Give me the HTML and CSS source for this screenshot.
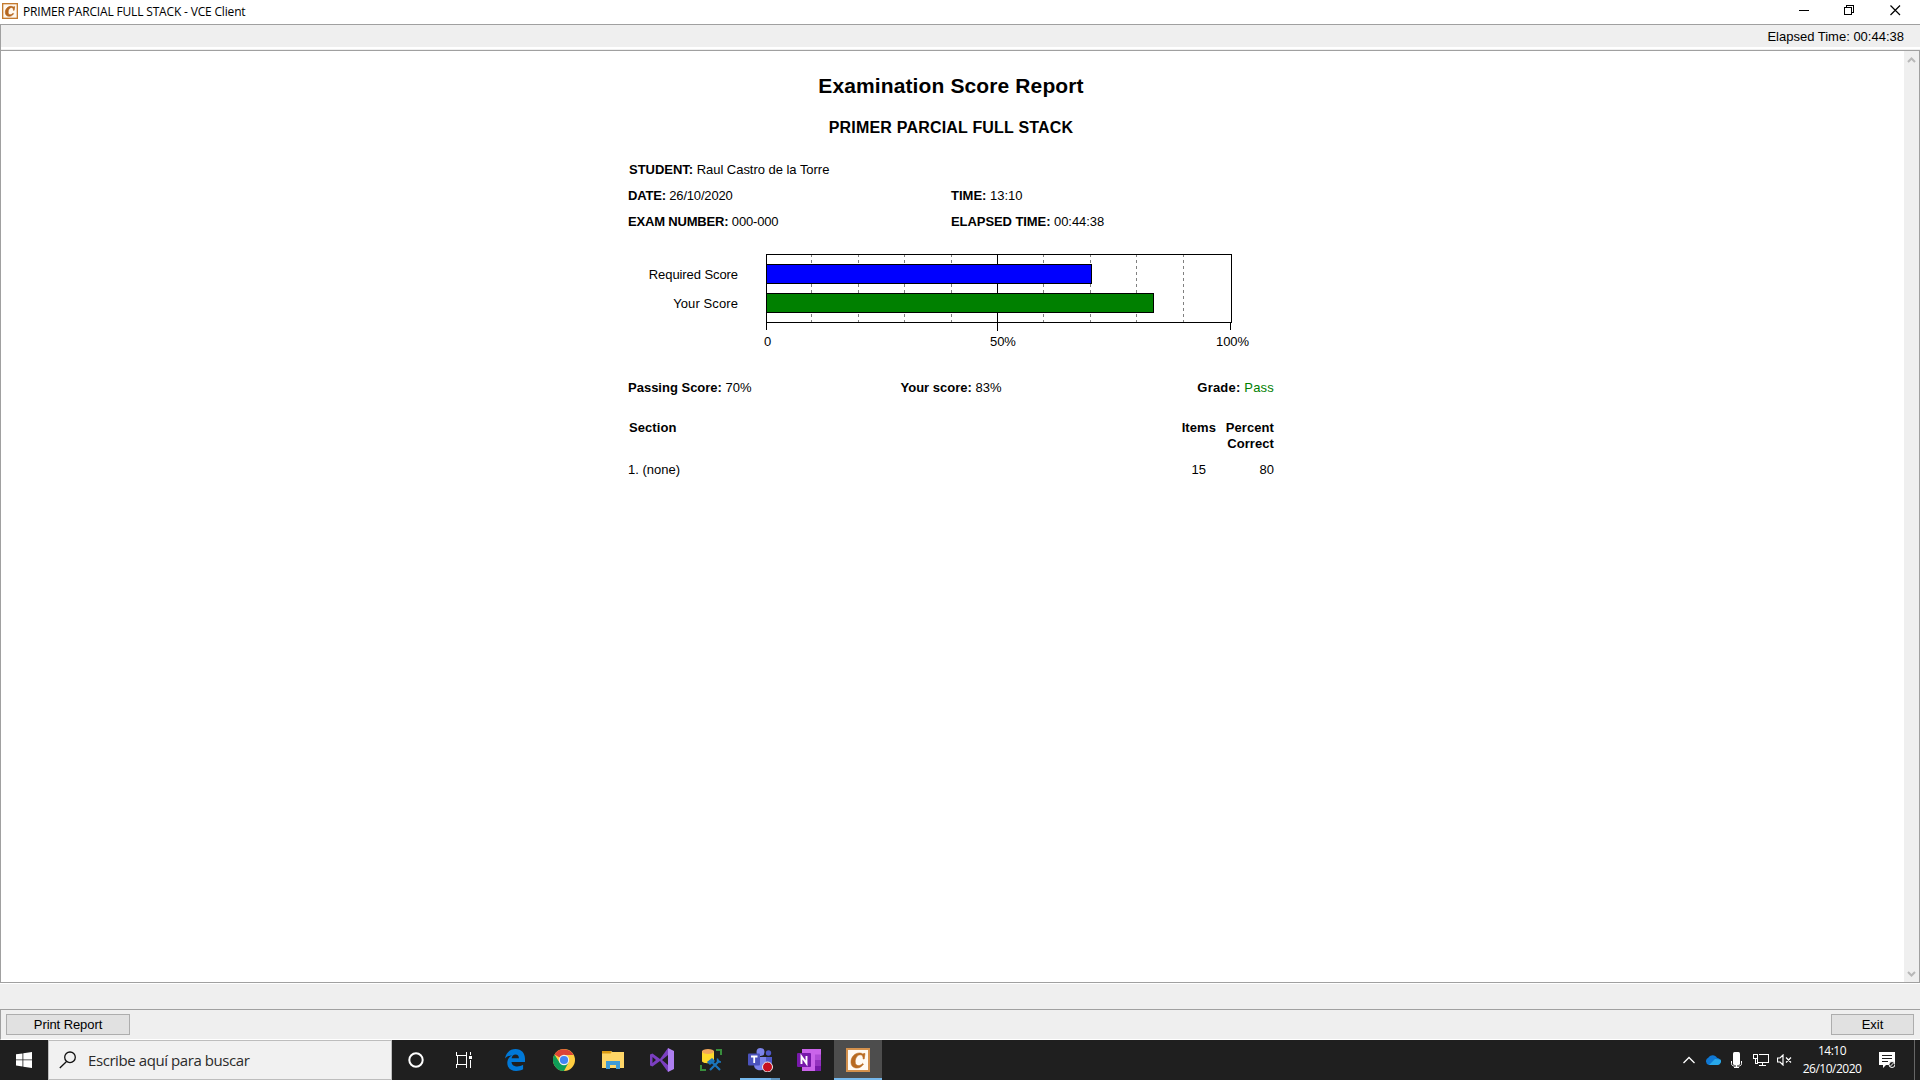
FILE: index.html
```html
<!DOCTYPE html>
<html lang="es">
<head>
<meta charset="utf-8">
<title>PRIMER PARCIAL FULL STACK - VCE Client</title>
<link rel="stylesheet" href="styles.css">
</head>
<body>
<header class="titlebar">
  <svg class="app-icon" viewBox="0 0 24 24"><rect x="1" y="1" width="22" height="22" fill="#fff8ef" stroke="#c47a2e" stroke-width="2"/><path d="M19 5.500 18.200 11h-1c0-3-1-4.200-3-4.200-3 0-5 3.500-5 7 0 2.500 1.200 3.800 3.200 3.800 1.600 0 3-.8 4.300-2.200l.8.800C15.700 18.500 13.700 20 11 20c-3.800 0-6-2.200-6-6 0-5 3.700-9 8.500-9 1.500 0 2.500.4 3.500 1.200l.6-.7z" fill="#b5651d" stroke="#b5651d"/></svg>
  <span class="title">PRIMER PARCIAL FULL STACK - VCE Client</span>
  <svg class="window-controls" viewBox="0 0 110 24" shape-rendering="crispEdges"><path d="M8 10.500h10M53.500 7.500h7v7h-7zM55.500 7v-1.500h7v7H61" fill="none" stroke="#000"/><path d="m99.500 5.500 9.500 9.500m0-9.500L99.500 15" stroke="#000" stroke-width="1.200" shape-rendering="auto"/></svg>
</header>
<div class="toolbar"><span>Elapsed Time: 00:44:38</span></div>
<main class="viewport">
  <article class="report">
    <h1>Examination Score Report</h1>
    <h2>PRIMER PARCIAL FULL STACK</h2>
    <div class="details">
      <p class="wide"><b>STUDENT:</b> Raul Castro de la Torre</p>
      <p class="tight"><b>DATE:</b> 26/10/2020</p><p><b>TIME:</b> 13:10</p>
      <p class="tight"><b>EXAM NUMBER:</b> 000-000</p><p class="elapsed"><b>ELAPSED TIME:</b> 00:44:38</p>
    </div>
    <div class="chart">
      <div class="labels"><span class="required">Required Score</span><span class="yours">Your Score</span></div>
      <div class="plot">
        <svg viewBox="0 0 466 77" shape-rendering="crispEdges"><path d="M45.500 1v67M92.500 1v67M138.500 1v67M185.500 1v67M277.500 1v67M324.500 1v67M370.500 1v67M417.500 1v67" stroke="#808080" stroke-dasharray="3 3" stroke-dashoffset="1"/><path d="M.5 76V.5h465v68H.5M231.500 0v77M464.500 68v8" fill="none" stroke="#000"/><rect x=".5" y="10.500" width="325" height="19" fill="#00f" stroke="#000"/><rect x=".5" y="39.500" width="387" height="19" fill="#008000" stroke="#000"/></svg>
        <div class="axis"><span>0</span><span>50%</span><span>100%</span></div>
      </div>
    </div>
    <div class="summary"><p><b>Passing Score:</b> 70%</p><p><b>Your score:</b> 83%</p><p class="grade"><b>Grade:</b> <span class="pass">Pass</span></p></div>
    <div class="sections head"><b>Section</b><b>Items</b><b>Percent<br>Correct</b></div>
    <div class="sections"><span>1. (none)</span><span class="items">15</span><span>80</span></div>
  </article>
  <div class="scrollbar"><svg viewBox="0 0 15 15"><path d="m4 10 3.500-3.500L11 10" /></svg><svg viewBox="0 0 15 15"><path d="m4 6 3.500 3.500L11 6"/></svg></div>
</main>
<div class="spacer"></div>
<div class="actions"><button class="print">Print Report</button><button class="exit">Exit</button></div>
<footer class="taskbar">
  <div class="start"><svg width="16" height="16" viewBox="0 0 16 16" fill="#fff"><path d="M0 2.300 6.500 1.400V7.500H0zM7.300 1.300 16 0v7.500H7.300zM0 8.300h6.500v6.200L0 13.600zM7.300 8.300H16V16l-8.700-1.300z"/></svg></div>
  <div class="search"><svg width="18" height="18" viewBox="0 0 18 18"><path d="M7.300 10.700.8 17M16.300 6.300a5.300 5.300 0 1 1-10.600 0 5.300 5.300 0 0 1 10.600 0z" fill="none" stroke="#111" stroke-width="1.300"/></svg><span>Escribe aquí para buscar</span></div>
  <div class="cell"><svg width="16" height="16" viewBox="0 0 16 16"><circle cx="8" cy="8" r="6.700" fill="none" stroke="#fff" stroke-width="2"/></svg></div>
  <div class="cell"><svg width="18" height="16" viewBox="0 0 18 16" shape-rendering="crispEdges"><path d="M1.500 0v3M11.500 0v3M1.500 16v-3M11.500 16v-3M1 3.500h11M1 12.500h11M2.500 3v10M11.500 3v10M15.500 0v3M15.500 8v8" fill="none" stroke="#fff"/><path d="M14 4h3v3h-3z" fill="#fff"/></svg></div>
  <div class="apps">
    <div class="cell"><svg width="22" height="22" viewBox="0 0 22 22"><path d="M1 9.500C2 3.500 6 0 11.500 0 17.500 0 21 4.300 21 9.700V13H7.500c.2 3 2.800 4.500 5.800 4.500 2 0 4-.6 5.800-1.700v4.500c-2 1.100-4.200 1.700-6.800 1.700-5.500 0-9-3.200-9-8 0-3.500 1.800-6.300 5-7.800C5.500 6.500 2.800 7.500 1 9.500zM7.600 9.200h7.300c0-2.300-1.100-3.700-3.400-3.700-2.100 0-3.500 1.500-3.900 3.700z" fill="#0078d7"/></svg></div>
    <div class="cell"><svg width="22" height="22" viewBox="0 0 22 22"><circle cx="11" cy="11" r="11" fill="#ffcd40"/><path d="M11 11 1.470 5.500A11 11 0 0 1 20.530 6H11z" fill="#db4437"/><path d="M1.470 5.500A11 11 0 0 0 11 22l4.500-8.500L11 14 6.500 13.500z" fill="#0f9d58"/><circle cx="11" cy="11" r="5.200" fill="#f1f1f1"/><circle cx="11" cy="11" r="4.100" fill="#4285f4"/></svg></div>
    <div class="cell"><svg width="22" height="18" viewBox="0 0 22 18"><path d="M0 0h9l1.500 1H22V17H0z" fill="#ffd667"/><path d="M0 0h8.500l1 1.500-1 1H0z" fill="#dc9b14"/><path d="M4 18v-8h14v8h-4v-4H8v4z" fill="#3f9bd6"/></svg></div>
    <div class="cell"><svg width="24" height="24" viewBox="0 0 24 24"><path d="M0 6.500 2.500 5.500 10 11l8-11v7l-6 5 6 5v7l-8-11-7.500 5.500L0 17.500zM2.500 9v6L6 12z" fill="#7b3fc0" fill-rule="evenodd"/><path d="m18 0 6 3v18l-6 3z" fill="#ae7ff0"/></svg></div>
    <div class="cell"><svg width="24" height="24" viewBox="0 0 24 24"><path d="M3 3v10c0 3 12 3 12 0V3z" fill="#ffd92b"/><ellipse cx="9" cy="3.500" rx="6" ry="2.500" fill="#f2a65a"/><path d="M17 2h5v5M2 17v5h5" fill="none" stroke="#388e3c" stroke-width="2"/><path d="m12 13 9 9M20 13l-9 9" stroke="#1a75bb" stroke-width="2.200"/><path d="M9 14l4-3 2 2-4 3zM18.500 10.500V14H22" stroke="#1a75bb" stroke-width="1.500" fill="#1a75bb"/></svg></div>
    <div class="cell teams"><svg width="26" height="24" viewBox="0 0 26 24"><circle cx="13.500" cy="4" r="4" fill="#7b83eb"/><circle cx="21.500" cy="5" r="2.700" fill="#5059c9"/><path d="M17 9h8v7c0 4-5 5-8 3z" fill="#5059c9"/><path d="M7 9h12v8c0 7-12 7-12 0z" fill="#7b83eb"/><rect x="1" y="5.500" width="12" height="12" rx="1" fill="#4b53bc"/><path d="M4 8.500h6.500M7.200 8v7" stroke="#fff" stroke-width="1.800"/><circle cx="20.500" cy="19" r="5" fill="#c50f1f" stroke="#eee"/></svg></div>
    <div class="cell"><svg width="24" height="22" viewBox="0 0 24 22"><path d="M5 0h19v22H5z" fill="#ca64ea"/><path d="M18 5.500h6V11h-6z" fill="#ae4bd5"/><path d="M18 11h6v5.500h-6z" fill="#9332bf"/><path d="M18 16.500h6V22h-6z" fill="#7719aa"/><rect y="4" width="14" height="14" rx="1" fill="#7719aa"/><path d="M4.500 15V7.500l5 7V7" fill="none" stroke="#fff" stroke-width="1.900"/></svg></div>
    <div class="cell active"><svg width="24" height="24" viewBox="0 0 24 24"><rect x="1" y="1" width="22" height="22" fill="#fffaf3" stroke="#d4914d" stroke-width="2"/><path d="M19 5.500 18.200 11h-1c0-3-1-4.200-3-4.200-3 0-5 3.500-5 7 0 2.500 1.200 3.800 3.200 3.800 1.600 0 3-.8 4.300-2.200l.8.800C15.700 18.500 13.700 20 11 20c-3.800 0-6-2.200-6-6 0-5 3.700-9 8.500-9 1.500 0 2.500.4 3.500 1.200l.6-.7z" fill="#b86a20" stroke="#b86a20" stroke-width=".6"/></svg></div>
  </div>
  <div class="tray">
    <svg width="14" height="8" viewBox="0 0 14 8"><path d="m1.500 7 5.500-5.500L12.500 7" fill="none" stroke="#fff" stroke-width="1.300"/></svg>
    <svg class="cloud" width="16" height="10" viewBox="0 0 16 10"><path d="M4 10a4 4 0 0 1-.5-7.600A5 5 0 0 1 12 2.800 3.700 3.700 0 0 1 12.500 10z" fill="#0f78d4"/><path d="M4 10h8.500a3.600 3.600 0 0 0 3-5.500L10 4z" fill="#28a8ea"/></svg>
    <svg class="mic" width="11" height="16" viewBox="0 0 11 16"><rect x="2" width="7" height="13" rx="1.500" fill="#fff"/><path d="M.5 9v2.500c0 2 1.500 2.500 3 2.500h4c1.500 0 3-.5 3-2.500V9M5.500 13v2.500M3 15.500h5" fill="none" stroke="#fff"/></svg>
    <svg class="net" width="17" height="14" viewBox="0 0 17 14" shape-rendering="crispEdges"><path d="M6 1.500h9.500v8H4.500V6M9.500 10v2.500M6 12.500h7M.5 1.500h4v4h-4zM2.500 5v5.500H5" fill="none" stroke="#fff"/></svg>
    <svg class="sound" width="15" height="12" viewBox="0 0 15 12"><path d="M.5 4v4H3l3 3V1L3 4zM9 3.500l5 5m0-5-5 5" fill="none" stroke="#fff" stroke-width="1.200"/></svg>
  </div>
  <div class="clock"><span>14:10</span><span>26/10/2020</span></div>
  <svg class="notice" width="16" height="17" viewBox="0 0 16 17"><path d="M0 0h16v13h-9l-3 3v-3H0z" fill="#fff"/><path d="M3 3.500h10M3 6.500h10M3 9.500h6" stroke="#1f1f1f"/><circle cx="13" cy="12.500" r="3" fill="#1f1f1f" stroke="#fff"/><path d="m11 14.500 4-4" stroke="#fff"/></svg>
</footer>
</body>
</html>
```
FILE: styles.css
```css
* { box-sizing: border-box; }
body { margin: 0; width: 1920px; height: 1080px; overflow: hidden; display: flex; flex-direction: column; background: #efefef; color: #000; font: 13px "Liberation Sans", Arial, sans-serif; }
h1, h2, p { margin: 0; }
svg { display: block; flex: none; }
.titlebar { height: 24px; flex: none; display: flex; align-items: center; background: #fff; padding: 0 10px 2px 2px; }
.app-icon { width: 16px; height: 16px; }
.title { margin-left: 5px; font: 12px "Open Sans", sans-serif; letter-spacing: -.17px; }
.window-controls { width: 110px; height: 24px; margin-left: auto; margin-right: 9px; margin-bottom: -2px; }
.toolbar { height: 26px; flex: none; display: flex; justify-content: flex-end; padding: 0 16px 0 0; line-height: 24px; border-top: 1px solid #a0a0a0; border-left: 1px solid #a0a0a0; background: linear-gradient(#efefef 22px, #fff 22px 24px, #efefef 24px); }
.viewport { height: 933px; flex: none; display: flex; border: 1px solid #a0a0a0; background: #fff; }
.report { width: 646px; margin-left: 627px; padding-top: 22px; }
h1 { font-size: 21px; line-height: 26px; text-align: center; letter-spacing: .12px; }
h2 { font-size: 16px; line-height: 24px; text-align: center; margin-top: 17px; letter-spacing: .2px; }
.details { display: grid; grid-template-columns: 323px 1fr; grid-auto-rows: 26px; line-height: 26px; margin-top: 17px; }
.wide { grid-column: 1 / 3; padding-left: 1px; letter-spacing: -.03px; }
.tight { letter-spacing: -.18px; }
.elapsed { letter-spacing: -.07px; }
.chart { display: flex; margin-top: 19px; height: 106px; }
.labels { width: 110px; padding-top: 6px; display: flex; flex-direction: column; align-items: flex-end; line-height: 29px; }
.required { letter-spacing: -.08px; }
.yours { letter-spacing: .1px; }
.plot { margin-left: 28px; width: 470px; }
.plot svg { width: 466px; height: 77px; }
.axis { display: grid; grid-template-columns: 226px 226px 34px; line-height: 20px; margin: 1px -15px 0 -2px; letter-spacing: -.1px; }
.summary { display: grid; grid-template-columns: 1fr 1fr 1fr; margin-top: 18px; line-height: 20px; }
.summary p:nth-child(2) { text-align: center; }
.summary p:nth-child(3) { text-align: right; }
.grade { letter-spacing: .2px; }
.pass { color: #008000; }
.sections { display: grid; grid-template-columns: 1fr 60px 58px; line-height: 16px; text-align: right; margin-top: 10px; }
.sections > :first-child { text-align: left; }
.head { margin-top: 22px; letter-spacing: .08px; }
.head > :first-child { padding-left: 1px; }
.items { padding-right: 10px; }
.scrollbar { margin-left: auto; width: 15px; background: #efefef; display: flex; flex-direction: column; justify-content: space-between; padding: 1px 0; }
.scrollbar path { fill: none; stroke: #b8b8b8; stroke-width: 2; }
.spacer { height: 26px; flex: none; border-top: 1px solid #fff; }
.actions { height: 31px; flex: none; display: flex; justify-content: space-between; align-items: flex-start; padding: 4px 6px 0 5px; border-top: 1px solid #a0a0a0; border-left: 1px solid #a0a0a0; border-bottom: 1px solid #fff; }
button { height: 21px; padding: 0; border: 1px solid #adadad; background: #e1e1e1; font: inherit; line-height: 19px; color: #000; }
.print { width: 124px; letter-spacing: -.08px; }
.exit { width: 83px; }
.taskbar { height: 40px; flex: none; display: flex; background: #1f1f1f; color: #fff; align-items: stretch; }
.start { width: 48px; display: grid; place-items: center; }
.search { width: 344px; background: #f1f1f1; border: 1px solid #bdbdbd; display: flex; align-items: center; gap: 11px; padding-left: 10px; color: #2b2b2b; font: 15px "Open Sans", sans-serif; letter-spacing: -.42px; }
.cell { width: 48px; display: grid; place-items: center; }
.apps { display: flex; gap: 1px; margin-left: 3px; }
.teams { background: linear-gradient(90deg, #76b9ed 31px, #5d93bd 31px) 4px 38px / 40px 2px no-repeat; }
.active { background: #4d4d4d; border-bottom: 2px solid #76b9ed; padding-top: 2px; }
.tray { margin-left: auto; display: flex; align-items: center; }
.cloud { margin-left: 9px; }
.mic { margin-left: 10px; }
.net { margin-left: 11px; }
.sound { margin-left: 7px; }
.clock { width: 58px; margin-left: 11px; display: flex; flex-direction: column; align-items: center; font: 12px/18px "Open Sans", sans-serif; letter-spacing: -.5px; padding-top: 2px; }
.notice { margin: 12px 19px 0 18px; }
.taskbar::after { content: ""; width: 5px; border-left: 1px solid #666; }
```
